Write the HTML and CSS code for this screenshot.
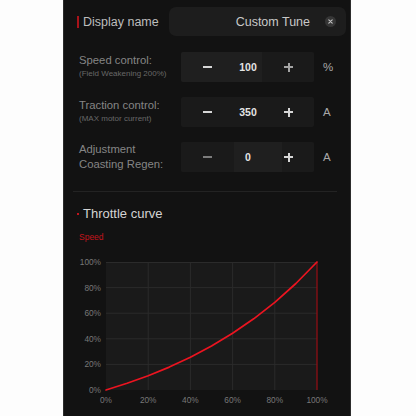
FILE: index.html
```html
<!DOCTYPE html>
<html lang="en">
<head>
	<meta charset="UTF-8">
	<meta name="viewport" content="width=device-width">
	<title>Custom tune</title>

	<link rel="stylesheet" href="styles.css">
</head>

<body>
<main class="panel">

<div class="name-row">
	<span class="mark"></span>
	<span class="name-label">Display name</span>
	<div class="name-input">
		<span class="name-value">Custom Tune</span>
		<span class="clear">
			<svg width="11" height="11" viewBox="0 0 11 11">
				<circle cx="5.5" cy="5.5" r="5.5" fill="#363636"/>
				<path d="M3.8 3.8 L7.2 7.2 M7.2 3.8 L3.8 7.2" stroke="#c4c4c4" stroke-width="1.1" stroke-linecap="round"/>
			</svg>
		</span>
	</div>
</div>

<div class="controls">
	<div class="control">
		<div class="label">
			Speed control:
			<small>(Field Weakening 200%)</small>
		</div>
		<div class="stepper lit-left">
			<span class="btn minus"></span>
			<span class="value">100</span>
			<span class="btn plus dim"></span>
		</div>
		<span class="unit">%</span>
	</div>

	<div class="control">
		<div class="label">
			Traction control:
			<small>(MAX motor current)</small>
		</div>
		<div class="stepper">
			<span class="btn minus"></span>
			<span class="value">350</span>
			<span class="btn plus"></span>
		</div>
		<span class="unit">A</span>
	</div>

	<div class="control">
		<div class="label two-line">
			Adjustment<br>Coasting Regen:
		</div>
		<div class="stepper lit-mid">
			<span class="btn minus dim"></span>
			<span class="value">0</span>
			<span class="btn plus"></span>
		</div>
		<span class="unit">A</span>
	</div>
</div>

<hr class="divider">

<h2 class="section-title"><span class="dot"></span>Throttle curve</h2>
<div class="axis-name">Speed</div>

<!-- plot box: x 36..247, y 11..139, grid every 20% -->
<svg class="chart" width="264" height="160" viewBox="0 0 264 160">
	<rect x="36" y="11" width="211" height="128" fill="#1a1a1a"/>
	<g stroke="#2b2b2b" stroke-width="1">
		<line x1="78.2" y1="11" x2="78.2" y2="139"/>
		<line x1="120.4" y1="11" x2="120.4" y2="139"/>
		<line x1="162.6" y1="11" x2="162.6" y2="139"/>
		<line x1="204.8" y1="11" x2="204.8" y2="139"/>
		<line x1="36" y1="11.5" x2="247" y2="11.5"/>
		<line x1="36" y1="36.6" x2="247" y2="36.6"/>
		<line x1="36" y1="62.2" x2="247" y2="62.2"/>
		<line x1="36" y1="87.8" x2="247" y2="87.8"/>
		<line x1="36" y1="113.4" x2="247" y2="113.4"/>
	</g>
	<line x1="247" y1="11" x2="247" y2="139" stroke="#8e0f15" stroke-width="1.3"/>
	<polyline fill="none" stroke="#ec1420" stroke-width="1.7" stroke-linejoin="round" stroke-linecap="round"
		points="36,139 57.1,132.3 78.2,124.7 99.3,116.1 120.4,106.3 141.5,95.1 162.6,82.3 183.7,67.8 204.8,51.4 225.9,32.5 247,11"/>
	<g class="tick-y" text-anchor="end">
		<text x="31" y="14">100%</text>
		<text x="31" y="39.6">80%</text>
		<text x="31" y="65.2">60%</text>
		<text x="31" y="90.8">40%</text>
		<text x="31" y="116.4">20%</text>
		<text x="31" y="142">0%</text>
	</g>
	<g class="tick-x" text-anchor="middle">
		<text x="36" y="152">0%</text>
		<text x="78.2" y="152">20%</text>
		<text x="120.4" y="152">40%</text>
		<text x="162.6" y="152">60%</text>
		<text x="204.8" y="152">80%</text>
		<text x="247" y="152">100%</text>
	</g>
</svg>

</main>
</body>
</html>
```

FILE: styles.css
```css
html, body {
	margin: 0;
	height: 100%;
}

body {
	background: #fdfdfd;
	display: flex;
	justify-content: center;
	font-family: "Liberation Sans", Arial, sans-serif;
	overflow: hidden;
}

.panel {
	box-sizing: border-box;
	width: 288px;
	min-height: 100%;
	margin-left: -2px;
	background: #121212;
	border-left: 1px solid #2c2c2c;
	border-right: 1px solid #2c2c2c;
	padding: 7px 4px 0 13px;
}

/* display name */
.name-row {
	display: flex;
	align-items: center;
	height: 29px;
}

.mark {
	width: 2px;
	height: 12px;
	background: #a8131a;
	margin-right: 4px;
}

.name-label {
	width: 86px;
	font-size: 12.5px;
	color: #bdbdbd;
}

.name-input {
	flex: 1;
	height: 29px;
	display: flex;
	align-items: center;
	justify-content: flex-end;
	background: #1d1d1d;
	border-radius: 7px;
	padding-right: 10px;
}

.name-value {
	font-size: 12.5px;
	color: #c8c8c8;
	margin-right: 15px;
}

.clear {
	display: flex;
}

/* number rows */
.controls {
	display: flex;
	flex-direction: column;
	gap: 15px;
	margin-top: 16px;
	padding-left: 2px;
}

.control {
	display: grid;
	grid-template-columns: 102px 133px auto;
	align-items: center;
	height: 30px;
}

.label {
	font-size: 11.3px;
	color: #858585;
	line-height: 13px;
}

.label small {
	display: block;
	font-size: 8px;
	color: #686868;
	line-height: 12px;
	margin-top: 1px;
}

.label.two-line {
	line-height: 15px;
}

.stepper {
	display: grid;
	grid-template-columns: 52px 30px 51px;
	height: 30px;
	background: #1a1a1a;
	border-radius: 2px;
}

.stepper.lit-left {
	background: linear-gradient(to right, #1f1f1f 81px, #1a1a1a 81px);
}

.stepper.lit-mid {
	background: linear-gradient(to right, #1a1a1a 53px, #1f1f1f 53px, #1f1f1f 101px, #1a1a1a 101px);
}

.btn {
	position: relative;
}

.btn::before,
.btn::after {
	content: "";
	position: absolute;
	left: 50%;
	top: 50%;
	background: #d6d6d6;
}

.btn::before {
	width: 9px;
	height: 2px;
	margin: -1px 0 0 -4.5px;
}

.btn.plus::after {
	width: 2px;
	height: 9px;
	margin: -4.5px 0 0 -1px;
}

.btn.minus::after {
	display: none;
}

.btn.dim::before,
.btn.dim::after {
	background: #7c7c7c;
}

.btn.plus.dim::before,
.btn.plus.dim::after {
	background: #a4a4a4;
}

.value {
	display: flex;
	align-items: center;
	justify-content: center;
	font-size: 10.5px;
	font-weight: bold;
	color: #e4e4e4;
}

.unit {
	padding-left: 9px;
	font-size: 11.5px;
	color: #a8a8a8;
}

.divider {
	border: 0;
	border-top: 1px solid #232323;
	margin: 19px 9px 0 -4px;
}

/* throttle curve */
.section-title {
	display: flex;
	align-items: center;
	margin: 14px 0 0;
	font-size: 13px;
	font-weight: normal;
	line-height: 16px;
	color: #d4d4d4;
}

.dot {
	width: 2px;
	height: 2px;
	background: #c0161e;
	margin-right: 4px;
}

.axis-name {
	margin: 9px 0 0 2px;
	font-size: 8.5px;
	line-height: 12px;
	color: #c4141c;
}

.chart {
	display: block;
	margin: 8px 0 0 -7px;
}

.chart text {
	font-family: "Liberation Sans", Arial, sans-serif;
	font-size: 8.3px;
	fill: #787878;
}
```
